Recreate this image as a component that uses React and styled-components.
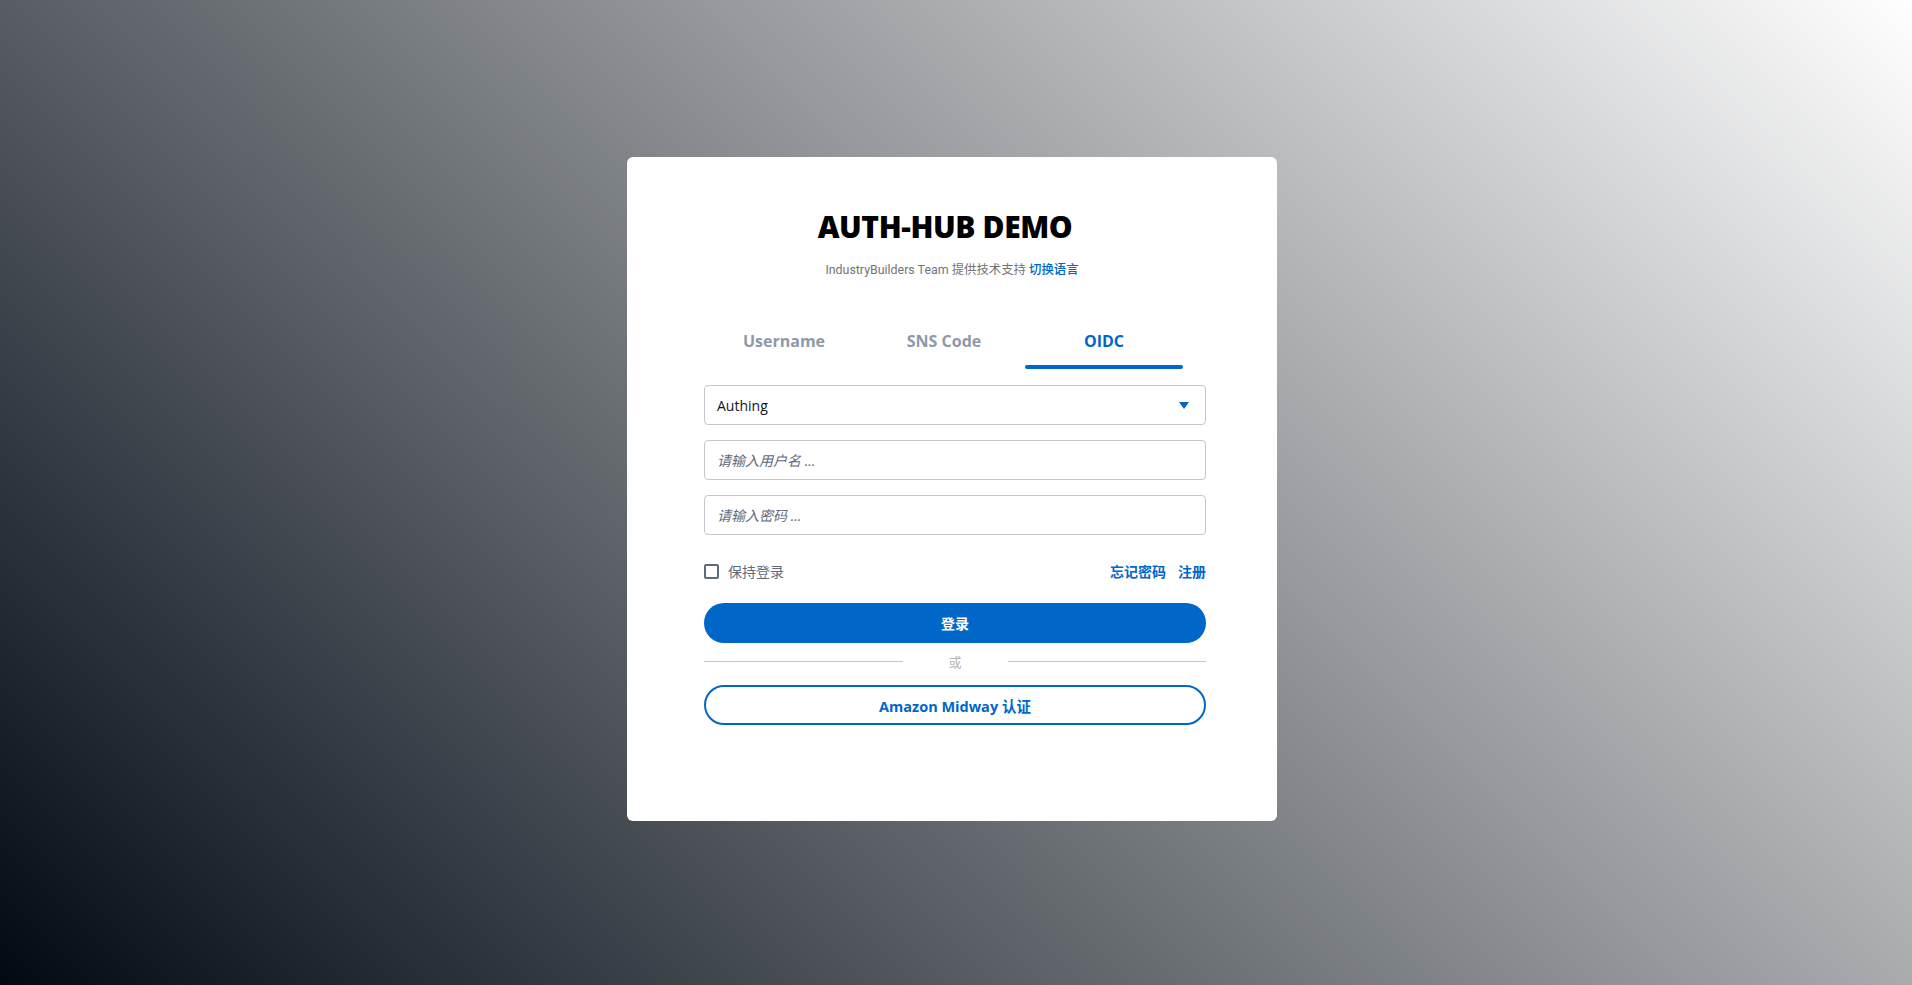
import React, { useState } from 'react'
import styled, { createGlobalStyle } from 'styled-components'

const GlobalStyle = createGlobalStyle`
  html, body {
    margin: 0;
    padding: 0;
  }
  body {
    font-family: "Open Sans", "Noto Sans CJK SC", sans-serif;
  }
  * {
    box-sizing: border-box;
  }
`

const TABS = ['Username', 'SNS Code', 'OIDC']

const App = () => {
  const [activeTab, setActiveTab] = useState('OIDC')
  const [remember, setRemember] = useState(false)

  return (
    <Page>
      <GlobalStyle />
      <Card>
        <Header>
          <Title>AUTH-HUB DEMO</Title>
          <Subtitle>
            IndustryBuilders Team 提供技术支持 <LangLink>切换语言</LangLink>
          </Subtitle>
        </Header>

        <Form>
          <TabRow>
            {TABS.map((tab) => (
              <Tab key={tab} onClick={() => setActiveTab(tab)}>
                <TabLabel $active={tab === activeTab}>{tab}</TabLabel>
                <TabBar $active={tab === activeTab} />
              </Tab>
            ))}
          </TabRow>

          <Fields>
            <SelectBox>
              <span>Authing</span>
              <svg width="10" height="8" viewBox="0 0 10 8">
                <path d="M0 0 L10 0 L5 7 Z" fill="#0066cc" />
              </svg>
            </SelectBox>
            <Input placeholder="请输入用户名 ..." />
            <Input type="password" placeholder="请输入密码 ..." />
          </Fields>

          <OptionsRow>
            <Remember onClick={() => setRemember(!remember)}>
              <CheckBox $checked={remember} />
              保持登录
            </Remember>
            <Links>
              <TextLink>忘记密码</TextLink>
              <TextLink>注册</TextLink>
            </Links>
          </OptionsRow>

          <PrimaryButton>登录</PrimaryButton>

          <Divider>
            <Line />
            <OrText>或</OrText>
            <Line />
          </Divider>

          <OutlineButton>Amazon Midway 认证</OutlineButton>
        </Form>
      </Card>
    </Page>
  )
}

export default App

const Page = styled.div`
display: flex;
align-items: center;
justify-content: center;
min-height: 100vh;
padding: 0 8px 7px 0;
background: linear-gradient(45deg, #010912 0%, #ffffff 100%);
`

const Card = styled.div`
display: flex;
flex-direction: column;
width: 650px;
height: 664px;
padding: 52px 71px 0 77px;
background-color: #ffffff;
border-radius: 6px;
`

const Header = styled.div`
display: flex;
flex-direction: column;
align-items: center;
gap: 16px;
margin-left: -6px;
`

const Title = styled.h1`
margin: 0;
font-family: "Open Sans", sans-serif;
font-size: 30px;
line-height: 36px;
font-weight: 800;
letter-spacing: -0.4px;
color: #000000;
transform: translateX(-7px);
`

const Subtitle = styled.div`
font-family: Roboto, "Noto Sans CJK SC", sans-serif;
font-size: 12.4px;
line-height: 18px;
color: #747474;
`

const LangLink = styled.a`
color: #0066cc;
font-weight: 500;
cursor: pointer;
`

const Form = styled.div`
display: flex;
flex-direction: column;
width: 502px;
margin-top: 41px;
`

const TabRow = styled.div`
display: flex;
width: 480px;
`

const Tab = styled.div`
flex: 1;
display: flex;
flex-direction: column;
align-items: center;
padding-top: 9px;
cursor: pointer;
`

const TabLabel = styled.span`
font-family: "Open Sans", sans-serif;
font-size: 16px;
line-height: 24px;
font-weight: 700;
color: ${(p) => (p.$active ? '#0066cc' : '#8d99a8')};
`

const TabBar = styled.div`
width: calc(100% - 2px);
height: 4px;
margin-top: 12px;
border-radius: 2px;
background-color: ${(p) => (p.$active ? '#0066cc' : 'transparent')};
`

const Fields = styled.div`
display: flex;
flex-direction: column;
gap: 15px;
margin-top: 16px;
`

const SelectBox = styled.div`
display: flex;
align-items: center;
justify-content: space-between;
height: 40px;
padding: 0 16px 0 12px;
border: 1px solid #c6c6cd;
border-radius: 4px;
font-family: "Open Sans", sans-serif;
font-size: 14px;
color: #0f141a;
cursor: pointer;

svg {
  margin-top: 1px;
}
`

const Input = styled.input`
height: 40px;
padding: 0 12px;
border: 1px solid #c6c6cd;
border-radius: 4px;
outline: none;
font-family: "Open Sans", "Noto Sans CJK SC", sans-serif;
font-size: 14px;
color: #0f141a;

&::placeholder {
  color: #5f6b7a;
  font-style: italic;
}
`

const OptionsRow = styled.div`
display: flex;
align-items: center;
justify-content: space-between;
height: 20px;
margin-top: 26px;
`

const Remember = styled.label`
display: flex;
align-items: center;
gap: 9px;
font-family: "Noto Sans CJK SC", sans-serif;
font-size: 14px;
color: #5f6b7a;
cursor: pointer;
`

const CheckBox = styled.span`
width: 15px;
height: 15px;
border: 2px solid #5f6b7a;
border-radius: 2px;
background-color: ${(p) => (p.$checked ? '#0066cc' : '#ffffff')};
`

const Links = styled.div`
display: flex;
gap: 12px;
`

const TextLink = styled.a`
font-family: "Noto Sans CJK SC", sans-serif;
font-size: 14px;
font-weight: 700;
color: #0066cc;
cursor: pointer;
`

const PrimaryButton = styled.button`
height: 40px;
margin-top: 22px;
border: none;
border-radius: 20px;
background-color: #0067c8;
color: #ffffff;
font-family: "Open Sans", "Noto Sans CJK SC", sans-serif;
font-size: 14px;
font-weight: 700;
cursor: pointer;
`

const Divider = styled.div`
display: flex;
align-items: center;
height: 18px;
margin-top: 9px;
`

const Line = styled.div`
flex: 1;
height: 1px;
background-color: #c6c6cd;
`

const OrText = styled.span`
padding: 0 46px;
font-family: "Noto Sans CJK SC", sans-serif;
font-size: 13px;
color: #b4b4b4;
`

const OutlineButton = styled.button`
height: 40px;
margin-top: 15px;
border: 2px solid #0066cc;
border-radius: 20px;
background-color: #ffffff;
color: #0066cc;
font-family: "Open Sans", "Noto Sans CJK SC", sans-serif;
font-size: 14.5px;
font-weight: 700;
cursor: pointer;
`
